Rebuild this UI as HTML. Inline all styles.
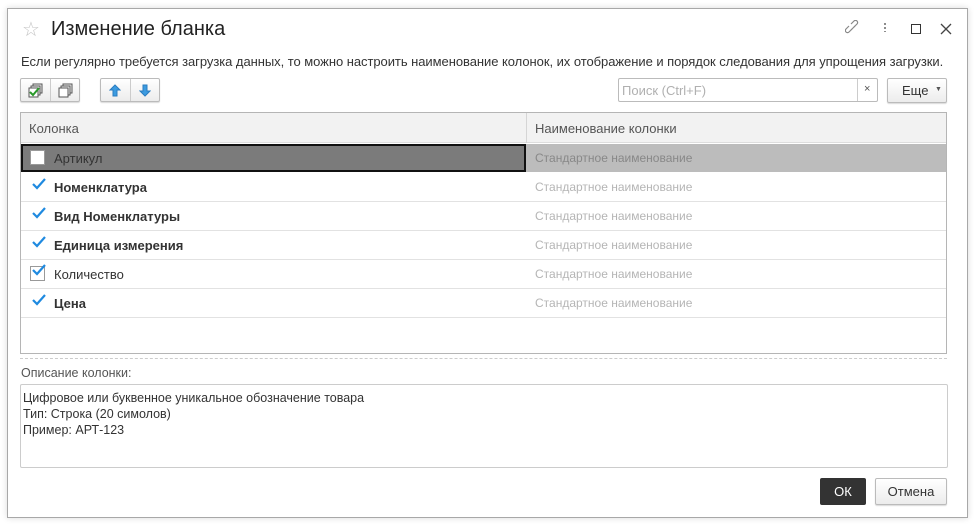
<!DOCTYPE html><html><head><meta charset="utf-8"><style>
*{box-sizing:border-box;margin:0;padding:0}
body{width:975px;height:525px;background:#fff;font-family:"Liberation Sans",Arial,sans-serif;font-size:13px;color:#333;position:relative;overflow:hidden}
.dlg{position:absolute;left:7px;top:8px;width:961px;height:510px;border:1px solid #a8a8a8;background:#fff;box-shadow:0 0 6px rgba(0,0,0,.15)}
.a{position:absolute}
.btn{position:absolute;border:1px solid #bbb;border-radius:2px;background:linear-gradient(#fff,#ececec);box-shadow:0 1px 1px rgba(0,0,0,.15)}
.row{position:absolute;left:21px;width:925px;height:29px;border-bottom:1px solid #e2e2e2}
.row .n{position:absolute;left:33px;top:7px;font-size:13px;color:#333}
.row .c{position:absolute;left:514px;top:7px;color:#b5b5b5;font-size:12px}
.chk{position:absolute;left:11px;top:5px}
</style></head><body>
<div class="dlg"></div>
<div class="a" style="left:22px;top:17px;font-size:20px;color:#c4c4c4">☆</div>
<div class="a" style="left:51px;top:18px;font-size:20px;color:#222">Изменение бланка</div>
<svg class="a" style="left:845px;top:20px" width="16" height="16" viewBox="0 0 16 16"><g fill="none" stroke="#888" stroke-width="1.2"><path d="M7 9l-3 3a2 2 0 0 1-3-3l3-3M9 7l3-3a2 2 0 0 0-3-3L6 4"/><path d="M6 10l4-4"/></g></svg>
<div class="a" style="left:884px;top:22px;width:2px;height:10px;background:radial-gradient(circle,#666 1px,transparent 1px) 0 0/2px 4px"></div>
<div class="a" style="left:911px;top:24px;width:10px;height:10px;border:1.5px solid #333"></div>
<svg class="a" style="left:940px;top:23px" width="12" height="12"><path d="M1 1l10 10M11 1L1 11" stroke="#444" stroke-width="1.3"/></svg>
<div class="a" style="left:21px;top:54px;font-size:13px;color:#333;letter-spacing:-0.05px">Если регулярно требуется загрузка данных, то можно настроить наименование колонок, их отображение и порядок следования для упрощения загрузки.</div>
<div class="btn" style="left:20px;top:78px;width:60px;height:24px"><div class="a" style="left:29px;top:0;width:1px;height:22px;background:#ccc"></div>
<svg class="a" style="left:7px;top:4px" width="16" height="15"><rect x="5" y="1" width="9" height="9" fill="#eee" stroke="#555"/><rect x="3" y="3" width="9" height="9" fill="#eee" stroke="#555"/><rect x="1" y="5" width="9" height="9" fill="#fff" stroke="#555"/><path d="M2 9l3 3 6-7" stroke="#2a9a2a" stroke-width="2" fill="none"/></svg>
<svg class="a" style="left:37px;top:4px" width="16" height="15"><rect x="5" y="1" width="9" height="9" fill="#eee" stroke="#555"/><rect x="3" y="3" width="9" height="9" fill="#eee" stroke="#555"/><rect x="1" y="5" width="9" height="9" fill="#fff" stroke="#555"/></svg></div>
<div class="btn" style="left:100px;top:78px;width:60px;height:24px"><div class="a" style="left:29px;top:0;width:1px;height:22px;background:#ccc"></div>
<svg class="a" style="left:8px;top:5px" width="12" height="13"><path d="M6 1L1 6h3v6h4V6h3z" fill="#3c9be0" stroke="#2a7cc0"/></svg>
<svg class="a" style="left:38px;top:5px" width="12" height="13"><path d="M6 12L1 7h3V1h4v6h3z" fill="#3c9be0" stroke="#2a7cc0"/></svg></div>
<div class="a" style="left:618px;top:78px;width:260px;height:24px;border:1px solid #bbb;border-radius:2px"><span class="a" style="left:3px;top:4px;color:#b0b0b0">Поиск (Ctrl+F)</span><div class="a" style="left:238px;top:0;width:1px;height:22px;background:#ccc"></div><span class="a" style="left:245px;top:4px;font-size:11px;color:#555">×</span></div>
<div class="btn" style="left:887px;top:78px;width:60px;height:25px"><span class="a" style="left:14px;top:4px;color:#333">Еще</span><span class="a" style="left:47px;top:7px;font-size:7px;color:#555">▼</span></div>
<div class="a" style="left:20px;top:112px;width:927px;height:242px;border:1px solid #b5b5b5">
<div class="a" style="left:0;top:0;width:925px;height:30px;background:#f2f2f2;border-bottom:1px solid #ddd"><span class="a" style="left:8px;top:8px;color:#555">Колонка</span><div class="a" style="left:505px;top:0;width:1px;height:30px;background:#d5d5d5"></div><span class="a" style="left:514px;top:8px;color:#555">Наименование колонки</span></div>
</div>
<div class="a" style="left:21px;top:144px;width:925px;height:28px;background:#bcbcbc"></div>
<div class="a" style="left:21px;top:144px;width:505px;height:28px;background:#7b7b7b;border:2px solid #111"></div>
<div class="a" style="left:30px;top:150px;width:15px;height:15px;background:#fff;border:1px solid #999"></div>
<span class="a" style="left:54px;top:151px;color:#333">Артикул</span>
<span class="a" style="left:535px;top:151px;color:#888;font-size:12px">Стандартное наименование</span>
<div class="row" style="top:173px"><svg class="chk" width="14" height="12"><path d="M1 6l4 4 8-9" stroke="#1f8ae0" stroke-width="2.2" fill="none"/></svg><span class="n" style="font-weight:bold">Номенклатура</span><span class="c">Стандартное наименование</span></div>
<div class="row" style="top:202px"><svg class="chk" width="14" height="12"><path d="M1 6l4 4 8-9" stroke="#1f8ae0" stroke-width="2.2" fill="none"/></svg><span class="n" style="font-weight:bold">Вид Номенклатуры</span><span class="c">Стандартное наименование</span></div>
<div class="row" style="top:231px"><svg class="chk" width="14" height="12"><path d="M1 6l4 4 8-9" stroke="#1f8ae0" stroke-width="2.2" fill="none"/></svg><span class="n" style="font-weight:bold">Единица измерения</span><span class="c">Стандартное наименование</span></div>
<div class="row" style="top:260px"><div class="a" style="left:9px;top:6px;width:15px;height:15px;border:1px solid #999"></div><svg class="chk" style="left:11px;top:4px" width="14" height="12"><path d="M1 6l4 4 8-9" stroke="#1f8ae0" stroke-width="2.2" fill="none"/></svg><span class="n">Количество</span><span class="c">Стандартное наименование</span></div>
<div class="row" style="top:289px"><svg class="chk" width="14" height="12"><path d="M1 6l4 4 8-9" stroke="#1f8ae0" stroke-width="2.2" fill="none"/></svg><span class="n" style="font-weight:bold">Цена</span><span class="c">Стандартное наименование</span></div>
<div class="a" style="left:20px;top:358px;width:927px;border-top:1px dashed #ccc"></div>
<div class="a" style="left:21px;top:366px;font-size:12.5px;color:#555">Описание колонки:</div>
<div class="a" style="left:20px;top:384px;width:928px;height:84px;border:1px solid #ccc;border-radius:2px;padding:5px 2px;font-size:12.5px;line-height:16px;color:#333">Цифровое или буквенное уникальное обозначение товара<br>Тип: Строка (20 симолов)<br>Пример: АРТ-123</div>
<div class="a" style="left:820px;top:478px;width:46px;height:27px;background:#333;border-radius:2px;color:#fff;text-align:center;line-height:27px">ОК</div>
<div class="btn" style="left:875px;top:478px;width:72px;height:27px;text-align:center;line-height:25px;color:#333">Отмена</div>
</body></html>
